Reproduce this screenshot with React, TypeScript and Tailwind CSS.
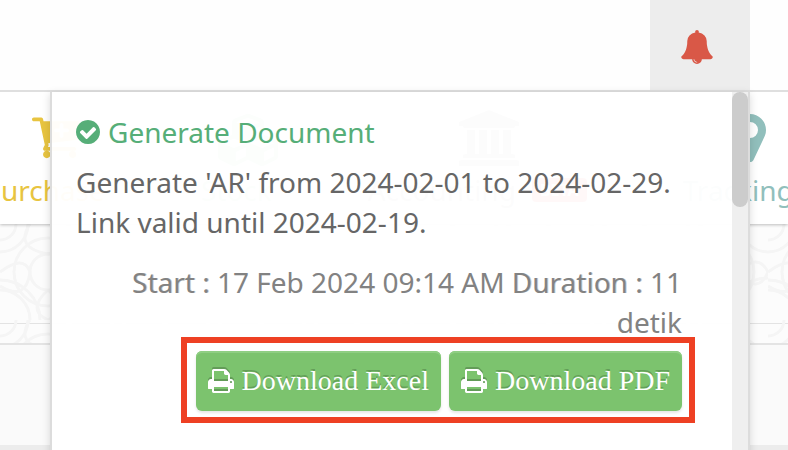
import React from 'react';
import { FaCubes } from 'react-icons/fa';

interface GlyphProps {
  d: string;
  width: number;
  className: string;
}

// Icon outlines use a y-up em square that is 1792 units tall
const Glyph: React.FC<GlyphProps> = ({ d, width, className }) => (
  <svg viewBox={`0 -1536 ${width} 1792`} fill="currentColor" className={className} aria-hidden="true">
    <path transform="scale(1 -1)" d={d} />
  </svg>
);

const bell =
  'M912 -160q0 16 -16 16q-59 0 -101.5 42.5t-42.5 101.5q0 16 -16 16t-16 -16q0 -73 51.5 -124.5t124.5 -51.5q16 0 16 16zM1728 128q0 -52 -38 -90t-90 -38h-448q0 -106 -75 -181t-181 -75t-181 75t-75 181h-448q-52 0 -90 38t-38 90q50 42 91 88t85 119.5t74.5 158.5t50 206t19.5 260q0 152 117 282.5t307 158.5q-8 19 -8 39q0 40 28 68t68 28t68 -28t28 -68q0 -20 -8 -39q190 -28 307 -158.5t117 -282.5q0 -139 19.5 -260t50 -206t74.5 -158.5t85 -119.5t91 -88z';
const checkCircle =
  'M1284 802q0 28 -18 46l-91 90q-19 19 -45 19t-45 -19l-408 -407l-226 226q-19 19 -45 19t-45 -19l-91 -90q-18 -18 -18 -46q0 -27 18 -45l362 -362q19 -19 45 -19q27 0 46 19l543 543q18 18 18 45zM1536 640q0 -209 -103 -385.5t-279.5 -279.5t-385.5 -103t-385.5 103t-279.5 279.5t-103 385.5t103 385.5t279.5 279.5t385.5 103t385.5 -103t279.5 -279.5t103 -385.5z';
const print =
  'M384 0h896v256h-896v-256zM384 640h896v384h-160q-40 0 -68 28t-28 68v160h-640v-640zM1536 576q0 26 -19 45t-45 19t-45 -19t-19 -45t19 -45t45 -19t45 19t19 45zM1664 576v-416q0 -13 -9.5 -22.5t-22.5 -9.5h-224v-160q0 -40 -28 -68t-68 -28h-960q-40 0 -68 28t-28 68v160h-224q-13 0 -22.5 9.5t-9.5 22.5v416q0 79 56.5 135.5t135.5 56.5h64v544q0 40 28 68t68 28h672q40 0 88 -20t76 -48l152 -152q28 -28 48 -76t20 -88v-256h64q79 0 135.5 -56.5t56.5 -135.5z';
const cart =
  'M1280 832q0 26 -19 45t-45 19h-128v128q0 26 -19 45t-45 19t-45 -19t-19 -45v-128h-128q-26 0 -45 -19t-19 -45t19 -45t45 -19h128v-128q0 -26 19 -45t45 -19t45 19t19 45v128h128q26 0 45 19t19 45zM640 0q0 -53 -37.5 -90.5t-90.5 -37.5t-90.5 37.5t-37.5 90.5t37.5 90.5t90.5 37.5t90.5 -37.5t37.5 -90.5zM1536 0q0 -53 -37.5 -90.5t-90.5 -37.5t-90.5 37.5t-37.5 90.5t37.5 90.5t90.5 37.5t90.5 -37.5t37.5 -90.5zM1664 1088v-512q0 -24 -16 -42.5t-41 -21.5l-1044 -122q1 -7 4.5 -21.5t6 -26.5t2.5 -22q0 -16 -24 -64h920q26 0 45 -19t19 -45t-19 -45t-45 -19h-1024q-26 0 -45 19t-19 45q0 14 11 39.5t29.5 59.5t20.5 38l-177 823h-204q-26 0 -45 19t-19 45t19 45t45 19h256q16 0 28.5 -6.5t20 -15.5t13 -24.5t7.5 -26.5t5.5 -29.5t4.5 -25.5h1201q26 0 45 -19t19 -45z';
const university =
  'M960 1536l960 -384v-128h-128q0 -26 -20.5 -45t-48.5 -19h-1526q-28 0 -48.5 19t-20.5 45h-128v128zM256 896h256v-768h128v768h256v-768h128v768h256v-768h128v768h256v-768h59q28 0 48.5 -19t20.5 -45v-64h-1664v64q0 26 20.5 45t48.5 19h59v768zM1851 -64q28 0 48.5 -19t20.5 -45v-128h-1920v128q0 26 20.5 45t48.5 19h1782z';
const marker =
  'M768 896q0 106 -75 181t-181 75t-181 -75t-75 -181t75 -181t181 -75t181 75t75 181zM1024 896q0 -109 -33 -179l-364 -774q-16 -33 -47.5 -52t-67.5 -19t-67.5 19t-46.5 52l-365 774q-33 70 -33 179q0 212 150 362t362 150t362 -150t150 -362z';

interface NavItemProps {
  icon: React.ReactNode;
  label: string;
  badge?: string;
  className: string;
}

const NavItem: React.FC<NavItemProps> = ({ icon, label, badge, className }) => (
  <a href="#" className={`flex shrink-0 flex-col items-center ${className}`}>
    {icon}
    <span className="flex items-center pr-6 text-[28px] leading-10">
      {label}
      {badge && <span className="ml-4 rounded bg-red-500 px-2 text-base leading-6 font-bold text-white">{badge}</span>}
    </span>
  </a>
);

const DownloadButton: React.FC<{ label: string }> = ({ label }) => (
  <button
    type="button"
    className="flex h-[60px] items-center gap-2 rounded-md bg-[#7cc36e] px-3 font-['Liberation_Serif',serif] text-[28px] text-white shadow-[inset_0_2px_0_#8fce83,0_2px_3px_#0000001a] [text-shadow:0_-2px_0_#00000033]"
  >
    <Glyph d={print} width={1664} className="h-7 w-[26px] drop-shadow-[0_-2px_0_#00000033]" />
    {label}
  </button>
);

const Term: React.FC<{ children: React.ReactNode }> = ({ children }) => (
  <span className="[text-shadow:1px_0_0_#82828266]">{children}</span>
);

const Notification: React.FC = () => (
  <div className="absolute top-full right-0 z-10 mt-0.5 flex h-[600px] w-[700px] border-x-2 border-[#dcdcdc] bg-white/97 shadow-[0_2px_8px_#00000026]">
    <div className="min-w-0 flex-1 py-5 pr-[37px] pl-6">
      <div className="pr-[13px] text-[28px] leading-10 text-[#666]">
        <h2 className="flex items-center gap-2 text-[#56ae78]">
          <Glyph d={checkCircle} width={1536} className="h-7 w-6" />
          Generate Document
        </h2>
        <p className="mt-[10px]">
          Generate 'AR' from 2024-02-01 to 2024-02-29. Link valid until 2024-02-19.
        </p>
        <p className="mt-5 text-right text-[#828282]">
          <Term>Start :</Term> 17 Feb 2024 09:14 AM <Term>Duration :</Term> 11 detik
        </p>
      </div>
      <div className="-mt-[5px] ml-auto flex w-fit gap-2 border-6 border-[#ee4023] pt-2 pr-[7px] pb-[6px] pl-[9px]">
        <DownloadButton label="Download Excel" />
        <DownloadButton label="Download PDF" />
      </div>
    </div>
    <div className="w-4 bg-[#efefef]">
      <div className="h-[115px] rounded-full bg-[#c9c9c9]/95" />
    </div>
  </div>
);

const Ornament: React.FC = () => (
  <svg className="h-full w-full" aria-hidden="true">
    <defs>
      <pattern id="ornament" width="96" height="96" patternUnits="userSpaceOnUse">
        <g fill="none" stroke="#f5f5f5" strokeWidth="3">
          <circle cx="0" cy="0" r="16" />
          <circle cx="0" cy="0" r="28" />
          <circle cx="96" cy="0" r="28" />
          <circle cx="0" cy="96" r="40" />
          <circle cx="0" cy="96" r="30" />
          <circle cx="48" cy="48" r="18" />
          <circle cx="48" cy="48" r="34" />
          <circle cx="96" cy="96" r="42" />
          <path d="M30 0q-16 24 18 30q34 -6 20 -30M0 48q24 -18 30 0q-4 30 -30 14M66 48q20 -20 30 0q-10 24 -30 0M48 66q-22 20 0 30q22 -10 0 -30" />
        </g>
      </pattern>
    </defs>
    <rect width="100%" height="100%" fill="url(#ornament)" />
  </svg>
);

const App: React.FC = () => {
  return (
    <div className="flex h-screen flex-col overflow-hidden bg-[#fcfcfc] font-['Noto_Sans',sans-serif]">
      <header className="relative z-10 flex h-[92px] shrink-0 justify-end border-b-2 border-[#dfdfdf] bg-[#fefefe] pr-[38px]">
        <div className="relative flex w-[100px]">
          <button type="button" aria-label="Notifications" className="flex flex-1 items-center justify-center bg-[#ededed] pr-[6px] text-[#d95847]">
            <Glyph d={bell} width={1792} className="mt-1 size-[34px]" />
          </button>
          <Notification />
        </div>
      </header>
      <nav className="relative flex h-[132px] shrink-0 gap-[72px] overflow-hidden bg-white pt-[18px] shadow-[0_1px_3px_#00000040]">
        <NavItem className="-ml-4 text-[#e8c440]" label="Purchase" icon={<Glyph d={cart} width={1664} className="h-[60px] w-12 pb-2" />} />
        <NavItem className="text-[#8fd0a6]" label="Stock" icon={<FaCubes className="h-[60px] w-16" />} />
        <NavItem className="text-[#999]" label="Accounting" badge="BETA" icon={<Glyph d={university} width={1920} className="h-[60px] w-15 pb-1" />} />
        <NavItem className="text-[#91bfbc]" label="Tracking" icon={<Glyph d={marker} width={1024} className="h-[60px] w-8 pb-1" />} />
      </nav>
      <main className="flex flex-1 flex-col">
        <div className="h-[119px] shrink-0">
          <Ornament />
          <hr className="-mt-5 border-[#e3e3e3]" />
        </div>
        <section className="flex-1 border-y-2 border-t-[#e4e4e4] border-b-[#ececec] bg-[#fafafa]" />
        <footer className="h-[3px] bg-[#ececec]" />
      </main>
    </div>
  );
};

export default App;
